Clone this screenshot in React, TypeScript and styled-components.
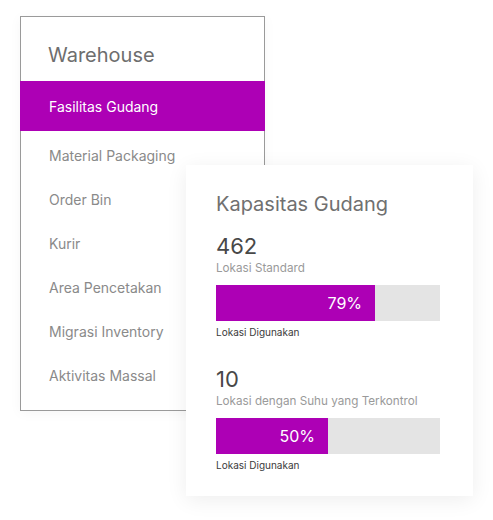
import styled, { createGlobalStyle } from 'styled-components';

const GlobalStyle = createGlobalStyle`
  body {
    margin: 0;
    background: #ffffff;
    font-family: Inter, "Noto Sans", sans-serif;
  }
`;

const menuItems = [
  'Fasilitas Gudang',
  'Material Packaging',
  'Order Bin',
  'Kurir',
  'Area Pencetakan',
  'Migrasi Inventory',
  'Aktivitas Massal',
];

const capacities = [
  { value: '462', label: 'Lokasi Standard', percent: '79%', fill: 71 },
  { value: '10', label: 'Lokasi dengan Suhu yang Terkontrol', percent: '50%', fill: 50 },
];

const App = () => {
  return (
    <>
      <GlobalStyle />
      <Page>
        <MenuPanel>
          <MenuTitle>Warehouse</MenuTitle>
          <MenuList>
            {menuItems.map((item, i) => (
              <MenuItem key={item} $active={i === 0}>
                {item}
              </MenuItem>
            ))}
          </MenuList>
        </MenuPanel>
        <CapacityCard>
          <CardTitle>Kapasitas Gudang</CardTitle>
          {capacities.map((c) => (
            <CapacityBlock key={c.label}>
              <Value>{c.value}</Value>
              <ValueLabel>{c.label}</ValueLabel>
              <Bar>
                <BarFill style={{ width: `${c.fill}%` }}>{c.percent}</BarFill>
              </Bar>
              <BarCaption>Lokasi Digunakan</BarCaption>
            </CapacityBlock>
          ))}
        </CapacityCard>
      </Page>
    </>
  );
};

const Page = styled.div`
  position: relative;
  width: 493px;
  height: 520px;
  padding: 16px 0 0 20px;
  box-sizing: border-box;
`;

const MenuPanel = styled.div`
  width: 245px;
  height: 395px;
  box-sizing: border-box;
  border: 1px solid #9a9a9a;
  background: #fff;
  box-shadow: 0 2px 12px rgba(0, 0, 0, 0.04);
`;

const MenuTitle = styled.div`
  padding: 25px 0 0 27px;
  height: 64px;
  box-sizing: border-box;
  color: #6e6e6e;
  font-size: 20px;
  line-height: 26px;
`;

const MenuList = styled.div`
  display: flex;
  flex-direction: column;
  margin: 0 -1px;
`;

const MenuItem = styled.div<{ $active?: boolean }>`
  display: flex;
  align-items: center;
  height: ${({ $active }) => ($active ? '50px' : '44px')};
  margin-bottom: ${({ $active }) => ($active ? '2px' : '0')};
  padding-left: 29px;
  font-size: 14px;
  color: ${({ $active }) => ($active ? '#ffffff' : '#8a8a8a')};
  background: ${({ $active }) => ($active ? '#ad00b5' : 'transparent')};
`;

const CapacityCard = styled.div`
  position: absolute;
  left: 186px;
  top: 165px;
  width: 287px;
  height: 331px;
  box-sizing: border-box;
  padding: 25px 33px 0 30px;
  background: #fff;
  box-shadow: 0 4px 20px rgba(0, 0, 0, 0.07);
  display: flex;
  flex-direction: column;
`;

const CardTitle = styled.div`
  color: #707070;
  font-size: 20px;
  line-height: 28px;
  margin-bottom: 15px;
`;

const CapacityBlock = styled.div`
  display: flex;
  flex-direction: column;
  margin-bottom: 27px;
`;

const Value = styled.div`
  color: #484848;
  font-size: 22px;
  line-height: 26px;
`;

const ValueLabel = styled.div`
  color: #9a9a9a;
  font-size: 11.7px;
  line-height: 16px;
  margin-top: 1px;
  margin-bottom: 9px;
`;

const Bar = styled.div`
  width: 224px;
  height: 36px;
  background: #e4e4e4;
  display: flex;
`;

const BarFill = styled.div`
  height: 100%;
  background: #ad00b5;
  color: #fff;
  font-size: 16px;
  display: flex;
  align-items: center;
  justify-content: flex-end;
  padding-right: 13px;
  box-sizing: border-box;
`;

const BarCaption = styled.div`
  color: #3a3a3a;
  font-size: 10px;
  line-height: 14px;
  margin-top: 4px;
`;

export default App;
